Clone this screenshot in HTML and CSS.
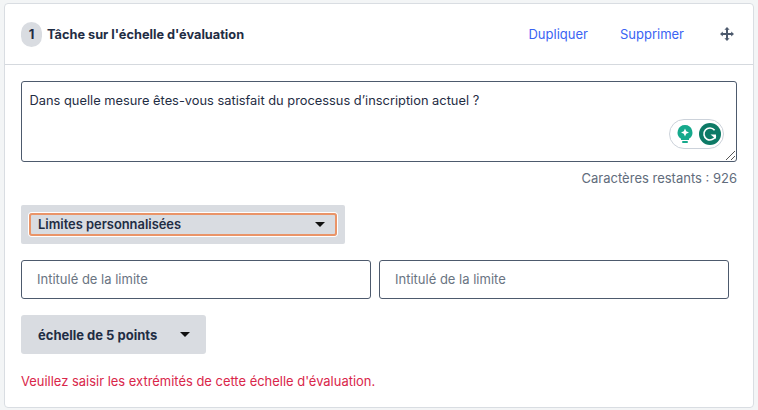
FILE: index.html
```html
<!DOCTYPE html>
<html lang="fr">
<head>
    <meta charset="UTF-8">
    <meta name="viewport" content="width=device-width, initial-scale=1.0">
    <title>Tâche sur l'échelle d'évaluation</title>
    <link rel="stylesheet" href="styles.css">
</head>
<body>
    <div class="card">
        <div class="card-header">
            <div class="step">1</div>
            <div class="card-title">Tâche sur l'échelle d'évaluation</div>
            <a class="action">Dupliquer</a>
            <a class="action">Supprimer</a>
            <svg class="move-icon" width="14" height="14" viewBox="0 0 14 14">
                <path d="M7 1v12M1 7h12" stroke="#4d5a6d" stroke-width="2" fill="none"/>
                <path d="M7 0l2.600 2.800H4.400zM7 14l2.600-2.800H4.400zM0 7l2.800-2.600v5.200zM14 7l-2.800-2.600v5.200z" fill="#4d5a6d"/>
            </svg>
        </div>
        <div class="card-body">
            <div class="question">
                Dans quelle mesure êtes-vous satisfait du processus d’inscription actuel ?
                <div class="grammarly">
                    <svg width="18" height="20" viewBox="0 0 18 20">
                        <path d="M9 1a7.500 7.500 0 0 0-4 13.800V16h8v-1.200A7.500 7.500 0 0 0 9 1z" fill="#15a98c"/>
                        <path d="M9 4.500l1.200 2.800L13 8.500l-2.800 1.200L9 12.500l-1.200-2.800L5 8.500l2.800-1.200z" fill="#fff"/>
                        <rect x="6" y="17" width="6" height="2" rx="1" fill="#15a98c"/>
                    </svg>
                    <svg width="22" height="22" viewBox="0 0 22 22">
                        <circle cx="11" cy="11" r="11" fill="#0d7a66"/>
                        <path d="M15.600 7.200A6 6 0 1 0 16.600 13" stroke="#fff" stroke-width="1.600" fill="none"/>
                        <path d="M11.500 11.500h5.500v4.500z" fill="#fff"/>
                    </svg>
                </div>
                <svg class="resize-grip" width="11" height="11" viewBox="0 0 11 11">
                    <path d="M1 10L10 1M6 10l4-4" stroke="#555" stroke-width="1" fill="none"/>
                </svg>
            </div>
            <div class="remaining">Caractères restants : 926</div>
            <div class="select-wrap">
                <div class="select-focus">
                    <span>Limites personnalisées</span>
                    <span class="caret"></span>
                </div>
            </div>
            <div class="limits">
                <div class="limit-input">Intitulé de la limite</div>
                <div class="limit-input">Intitulé de la limite</div>
            </div>
            <div class="points-button">
                <span>échelle de 5 points</span>
                <span class="caret"></span>
            </div>
            <div class="error">Veuillez saisir les extrémités de cette échelle d'évaluation.</div>
        </div>
    </div>
</body>
</html>
```

FILE: styles.css
```css
html, body {
    height: 100%;
}
body {
    margin: 0;
    padding: 3px 4px 3px 4px;
    box-sizing: border-box;
    background-color: #f3f5f6;
    font-family: Inter, Arial, sans-serif;
    font-size: 13px;
    color: #1f2d44;
    overflow: hidden;
}
.card {
    height: 405px;
    box-sizing: border-box;
    background-color: #fff;
    border: 1px solid #d9dde2;
    border-radius: 4px;
}
.card-header {
    display: flex;
    align-items: center;
    height: 60px;
    padding: 0 19px 0 16px;
    border-bottom: 1px solid #d5d9de;
}
.step {
    width: 21px;
    height: 25px;
    border-radius: 11px;
    background-color: #d9dce1;
    font-weight: 700;
    font-size: 13px;
    line-height: 25px;
    text-align: center;
    margin-right: 5px;
}
.card-title {
    font-weight: 700;
    font-size: 12.750px;
    flex: 1;
}
.action {
    color: #3a63f3;
    font-size: 13px;
    margin-right: 32px;
}
.action:nth-of-type(2) {
    margin-right: 36px;
}
.card-body {
    padding: 16px 16px 0;
}
.question {
    position: relative;
    height: 81px;
    box-sizing: border-box;
    padding: 10px 8px 10px 7.500px;
    border: 1px solid #4d5a6d;
    border-radius: 3px;
    font-size: 12.850px;
    line-height: 18px;
}
.grammarly {
    position: absolute;
    right: 12px;
    bottom: 12px;
    display: flex;
    align-items: center;
    gap: 5px;
    height: 28px;
    padding: 0 2px 0 6px;
    border: 1px solid #ccd2da;
    border-radius: 15px;
    background-color: #fff;
}
.resize-grip {
    position: absolute;
    right: 0;
    bottom: 0;
}
.remaining {
    margin-top: 7px;
    text-align: right;
    color: #616c7c;
    font-size: 13px;
    line-height: 18px;
}
.select-wrap {
    width: 324px;
    height: 39px;
    box-sizing: border-box;
    margin-top: 18px;
    padding: 8px;
    background-color: #d9dce1;
    border-radius: 2px;
}
.select-focus {
    display: flex;
    align-items: center;
    justify-content: space-between;
    height: 23px;
    box-sizing: border-box;
    padding: 0 10px 0 7px;
    border: 2px solid #ea9468;
    border-radius: 3px;
    box-shadow: 0 0 0 1px #fff;
    font-weight: 600;
    font-size: 12.900px;
}
.caret {
    width: 0;
    height: 0;
    border-left: 5px solid transparent;
    border-right: 5px solid transparent;
    border-top: 5px solid #111;
}
.limits {
    display: flex;
    gap: 8px;
    margin-top: 16px;
}
.limit-input {
    width: 350px;
    height: 39px;
    box-sizing: border-box;
    padding: 0 15px;
    border: 1px solid #4d5a6d;
    border-radius: 3px;
    color: #6a7482;
    font-size: 13px;
    line-height: 37px;
}
.points-button {
    display: flex;
    align-items: center;
    justify-content: space-between;
    width: 185px;
    height: 39px;
    box-sizing: border-box;
    margin-top: 16px;
    padding: 0 16px 0 17px;
    background-color: #d9dce1;
    border-radius: 3px;
    font-weight: 700;
    font-size: 13px;
}
.error {
    margin-top: 18px;
    color: #d9264a;
    font-size: 12.950px;
    line-height: 18px;
}
```
